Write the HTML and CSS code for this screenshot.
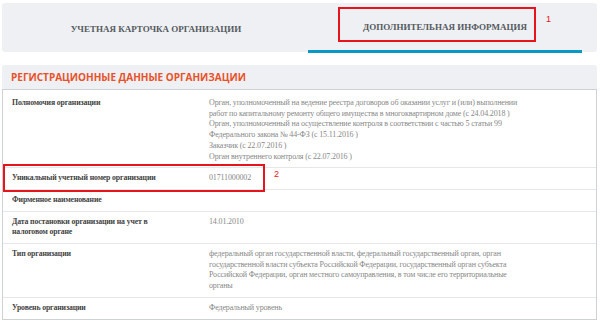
FILE: index.html
```html
<!DOCTYPE html>
<html lang="ru">
<head>
    <meta charset="UTF-8">
    <meta name="viewport" content="width=device-width, initial-scale=1.0">
    <title>Дополнительная информация</title>
    <link rel="stylesheet" href="styles.css">
</head>
<body>
    <div class="page">
        <div class="tabs">
            <div class="tab">УЧЕТНАЯ КАРТОЧКА ОРГАНИЗАЦИИ</div>
            <div class="tab active">ДОПОЛНИТЕЛЬНАЯ ИНФОРМАЦИЯ</div>
        </div>

        <div class="section">
            <h3 class="section-title">РЕГИСТРАЦИОННЫЕ ДАННЫЕ ОРГАНИЗАЦИИ</h3>
            <div class="table">
                <div class="row">
                    <div class="label">Полномочия организации</div>
                    <div class="value">
                        Орган, уполномоченный на ведение реестра договоров об оказании услуг и (или) выполнении<br>
                        работ по капитальному ремонту общего имущества в многоквартирном доме (с 24.04.2018 )<br>
                        Орган, уполномоченный на осуществление контроля в соответствии с частью 5 статьи 99<br>
                        Федерального закона № 44-ФЗ (с 15.11.2016 )<br>
                        Заказчик (с 22.07.2016 )<br>
                        Орган внутреннего контроля (с 22.07.2016 )
                    </div>
                </div>
                <div class="row">
                    <div class="label">Уникальный учетный номер организации</div>
                    <div class="value">01711000002</div>
                </div>
                <div class="row">
                    <div class="label">Фирменное наименование</div>
                    <div class="value"></div>
                </div>
                <div class="row">
                    <div class="label">Дата постановки организации на учет в<br>налоговом органе</div>
                    <div class="value">14.01.2010</div>
                </div>
                <div class="row">
                    <div class="label">Тип организации</div>
                    <div class="value">
                        федеральный орган государственной власти, федеральный государственный орган, орган<br>
                        государственной власти субъекта Российской Федерации, государственный орган субъекта<br>
                        Российской Федерации, орган местного самоуправления, в том числе его территориальные<br>
                        органы
                    </div>
                </div>
                <div class="row">
                    <div class="label">Уровень организации</div>
                    <div class="value">Федеральный уровень</div>
                </div>
            </div>
        </div>

        <!-- пометки поверх скриншота -->
        <div class="mark mark-tab"></div>
        <span class="num num-tab">1</span>
        <div class="mark mark-row"></div>
        <span class="num num-row">2</span>
    </div>
</body>
</html>
```

FILE: styles.css
```css
body {
    margin: 0;
    padding: 0;
    background-color: #ffffff;
    font-family: "Liberation Serif", serif;
}
.page {
    position: relative;
    width: 595px;
    padding: 3px 0 0 2px;
}
.tabs {
    display: flex;
    height: 49px;
    padding-left: 17px;
    gap: 15px;
    background-color: #eef0f3;
    border-radius: 3px;
}
.tab {
    width: 274px;
    height: 50px;
    box-sizing: border-box;
    display: flex;
    align-items: center;
    justify-content: center;
    padding-top: 1px;
    font-size: 9px;
    font-weight: bold;
    color: #555a60;
}
.tab.active {
    border-bottom: 3px solid #0a98c6;
}
.section {
    margin-top: 13px;
}
.section-title {
    margin: 0;
    height: 24px;
    line-height: 25px;
    padding-left: 9px;
    background-color: #eef0f3;
    font-family: "Open Sans", sans-serif;
    font-size: 10px;
    font-weight: bold;
    color: #e8522a;
    border-radius: 3px 3px 0 0;
}
.table {
    border: 1px solid #cfd2d5;
    padding-top: 3px;
}
.row {
    display: grid;
    grid-template-columns: 197px 1fr;
    padding: 5px 9px 5px 9px;
    border-top: 1px solid #e6e7e9;
    font-size: 8px;
    line-height: 10.7px;
}
.row:first-child {
    border-top: none;
}
.label {
    font-size: 7.8px;
    font-weight: bold;
    letter-spacing: -0.15px;
    color: #444;
}
.value {
    letter-spacing: -0.15px;
    color: #888;
}
.mark {
    position: absolute;
    border: 2px solid #e8141c;
}
.mark-tab {
    left: 338px;
    top: 7px;
    width: 194px;
    height: 31px;
}
.mark-row {
    left: 3px;
    top: 164px;
    width: 258px;
    height: 24px;
}
.num {
    position: absolute;
    font-family: "Liberation Sans", sans-serif;
    font-size: 9px;
    color: #e8141c;
}
.num-tab {
    left: 546px;
    top: 14px;
}
.num-row {
    left: 274px;
    top: 169px;
}
```
